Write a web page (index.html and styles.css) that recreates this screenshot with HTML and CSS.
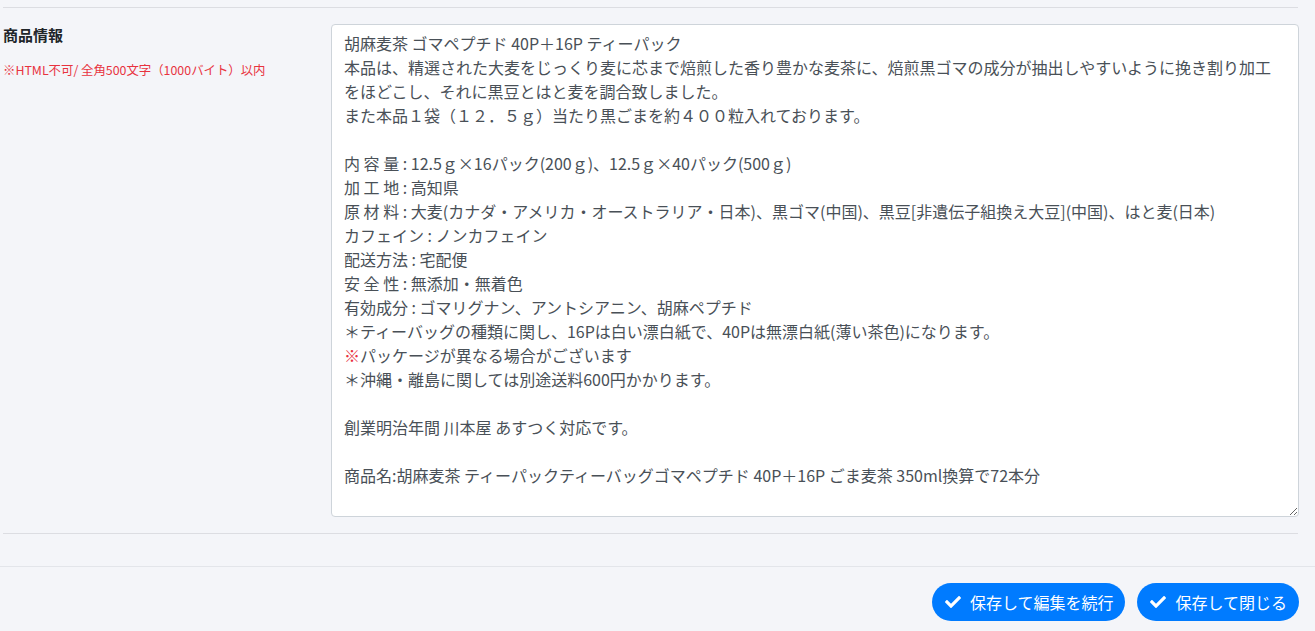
FILE: index.html
```html
<!DOCTYPE html>
<html lang="ja">
<head>
<meta charset="utf-8">
<title>商品情報</title>
<link rel="stylesheet" href="styles.css">
</head>
<body>
<div class="page">
  <div class="form-body">
    <div class="form-row">
      <div class="label-col">
        <div class="label">商品情報</div>
        <div class="note">※HTML不可/ 全角500文字（1000バイト）以内</div>
      </div>
      <div class="field-col">
        <div class="textarea" contenteditable="true" role="textbox" aria-multiline="true">胡麻麦茶 ゴマペプチド 40P＋16P ティーパック
本品は、精選された大麦をじっくり麦に芯まで焙煎した香り豊かな麦茶に、焙煎黒ゴマの成分が抽出しやすいように挽き割り加工をほどこし、それに黒豆とはと麦を調合致しました。
また本品１袋（１２．５ｇ）当たり黒ごまを約４００粒入れております。

内 容 量 : 12.5ｇ×16パック(200ｇ)、12.5ｇ×40パック(500ｇ)
加 工 地 : 高知県
原 材 料 : 大麦(カナダ・アメリカ・オーストラリア・日本)、黒ゴマ(中国)、黒豆[非遺伝子組換え大豆](中国)、はと麦(日本)
カフェイン : ノンカフェイン
配送方法 : 宅配便
安 全 性 : 無添加・無着色
有効成分 : ゴマリグナン、アントシアニン、胡麻ペプチド
＊ティーバッグの種類に関し、16Pは白い漂白紙で、40Pは無漂白紙(薄い茶色)になります。
<span class="mark">※</span>パッケージが異なる場合がございます
＊沖縄・離島に関しては別途送料600円かかります。

創業明治年間 川本屋 あすつく対応です。

商品名:胡麻麦茶 ティーパックティーバッグゴマペプチド 40P＋16P ごま麦茶 350ml換算で72本分</div>
      </div>
    </div>
  </div>
  <div class="footer">
    <button class="btn" type="button">
      <svg class="check" viewBox="0 0 512 512" width="16" height="16"><path fill="#fff" d="M173.9 439.4L7.5 273c-10-10-10-26.2 0-36.2l36.2-36.2c10-10 26.2-10 36.2 0L192 312.7 432.1 72.6c10-10 26.2-10 36.2 0l36.2 36.2c10 10 10 26.2 0 36.2L210.1 439.4c-10 10-26.2 10-36.2 0z"/></svg>
      <span>保存して編集を続行</span>
    </button>
    <button class="btn" type="button">
      <svg class="check" viewBox="0 0 512 512" width="16" height="16"><path fill="#fff" d="M173.9 439.4L7.5 273c-10-10-10-26.2 0-36.2l36.2-36.2c10-10 26.2-10 36.2 0L192 312.7 432.1 72.6c10-10 26.2-10 36.2 0l36.2 36.2c10 10 10 26.2 0 36.2L210.1 439.4c-10 10-26.2 10-36.2 0z"/></svg>
      <span>保存して閉じる</span>
    </button>
  </div>
</div>
</body>
</html>
```

FILE: styles.css
```css
* { box-sizing: border-box; }
html, body {
  margin: 0;
  padding: 0;
  background: #f4f5f9;
  font-family: "Noto Sans CJK JP", "Noto Sans", sans-serif;
  color: #212529;
}
.page {
  width: 1315px;
  height: 631px;
  overflow: hidden;
}
.form-body {
  margin: 7px 17px 0 3px;
  border-top: 1px solid #dcdde2;
  border-bottom: 1px solid #dcdde2;
  padding: 16px 0 16px 0;
}
.form-row {
  display: flex;
}
.label-col {
  width: 328px;
  flex: none;
}
.label {
  font-size: 15px;
  font-weight: 700;
  line-height: 22px;
  color: #212529;
}
.note {
  margin-top: 16px;
  font-size: 12.4px;
  line-height: 16px;
  color: #e8333f;
}
.field-col {
  flex: 1;
  display: flex;
}
.textarea {
  display: block;
  width: 968px;
  height: 493px;
  margin: 0;
  padding: 6px 12px;
  border: 1px solid #ced4da;
  border-radius: 4px;
  background: #fff;
  color: #495057;
  font-family: "Noto Sans CJK JP", "Noto Sans", sans-serif;
  font-size: 16px;
  line-height: 24px;
  white-space: pre-wrap;
  word-break: break-all;
  resize: vertical;
  overflow: hidden;
  outline: none;
}
.mark {
  color: #e8333f;
}
.footer {
  margin-top: 32px;
  border-top: 1px solid #e3e5ea;
  padding: 16px 16px 0 0;
  display: flex;
  justify-content: flex-end;
  gap: 12px;
}
.btn {
  display: inline-flex;
  align-items: center;
  gap: 9px;
  height: 38px;
  padding: 0 12px 0 13px;
  border: none;
  border-radius: 19px;
  background: #007bff;
  color: #fff;
  font-family: "Noto Sans CJK JP", "Noto Sans", sans-serif;
  font-size: 16px;
  line-height: 24px;
  cursor: pointer;
}
.check {
  flex: none;
}
```
